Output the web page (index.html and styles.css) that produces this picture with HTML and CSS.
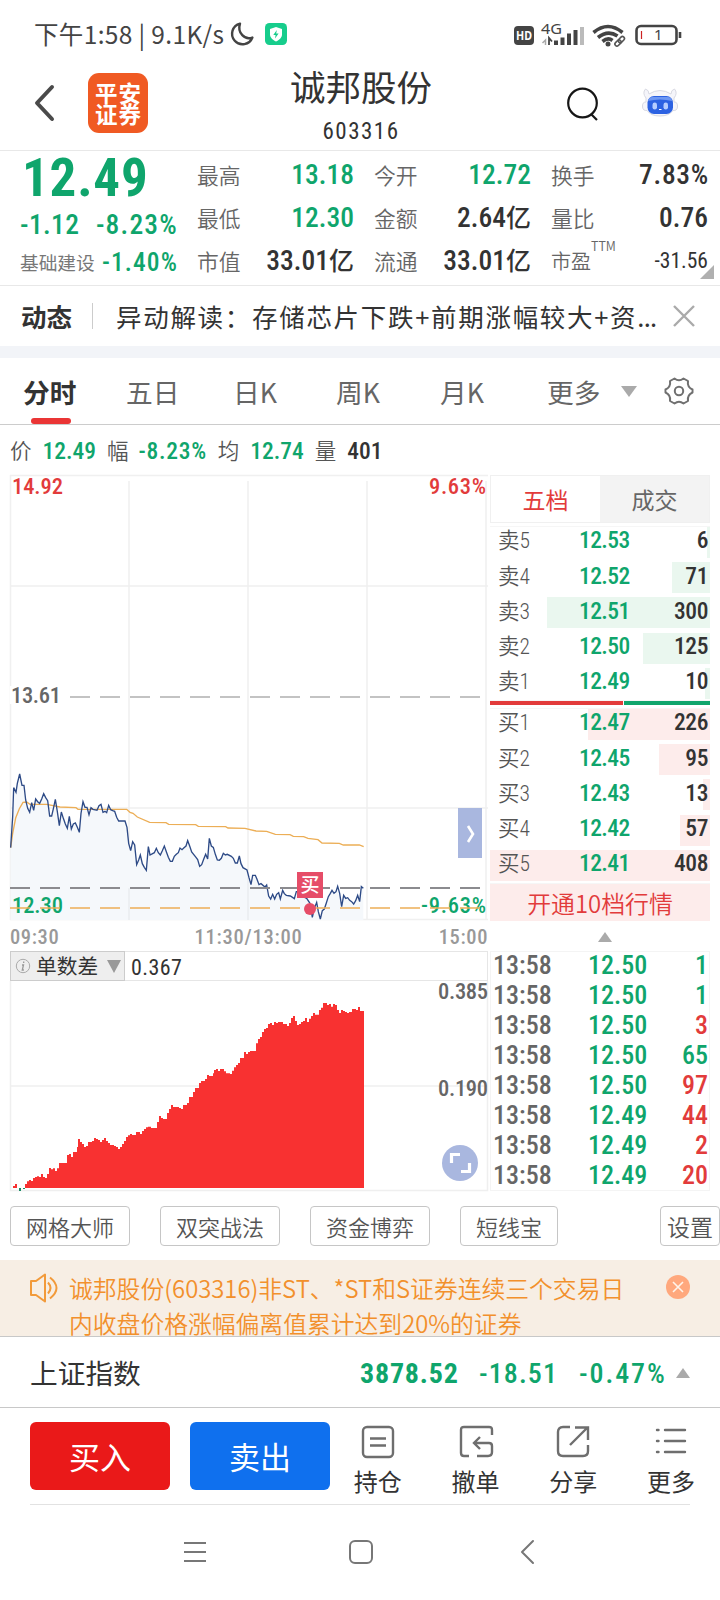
FILE: index.html
```html
<!DOCTYPE html>
<html lang="zh-CN">
<head>
<meta charset="utf-8">
<title>诚邦股份 603316</title>
<link rel="stylesheet" href="styles.css">
</head>
<body>
<div class="phone">
  <div class="status">
    <span class="status-time">下午1:58 | 9.1K/s</span>
    <svg class="status-moon" width="24" height="24" viewBox="0 0 24 24"><path d="M10 1.6A10.5 10.5 0 1 0 22.4 15.5C15 18.5 7 11 10 1.6Z" fill="none" stroke="#444" stroke-width="2.4" stroke-linejoin="round"/></svg>
    <svg class="status-shield" width="22" height="22" viewBox="0 0 22 22"><rect width="22" height="22" rx="4.5" fill="#17cd8c"/><path d="M11 4l6 2v5.500c0 3.500-3 5.500-6 7-3-1.500-6-3.500-6-7V6z" fill="#fff"/><path d="M11.800 7l-3.500 5h2.300l-.6 3.500 3.600-5h-2.400z" fill="#17cd8c"/></svg>
    <svg class="status-right" width="170" height="28" viewBox="512 20 170 28">
      <rect x="514" y="25" width="20" height="19" rx="4" fill="#444"/>
      <text x="516" y="38.500" class="hd" textLength="16" lengthAdjust="spacingAndGlyphs">HD</text>
      <text x="541" y="33" class="g4" textLength="21" lengthAdjust="spacingAndGlyphs">4G</text>
      <path d="M545.500 44v-5l-3 3" stroke="#aaa" stroke-width="1.500" fill="none"/><path d="M549 44v-7l3 3.500" stroke="#444" stroke-width="1.800" fill="none"/>
      <path d="M554 44v-4.500h4V44zM560.500 44v-7.500h4V44zM567 44V32.500h4V44zM573.500 44V29h4V44z" fill="#444"/><path d="M580 44V26h4v18z" fill="#bbb"/>
      <g fill="none" stroke="#444" stroke-width="3.600"><path d="M593.500 31.500Q608 19.500 622.500 31.500"/><path d="M598 36.500Q608 28.500 617.500 35"/><path d="M602.500 40.500Q608 36 612.500 39.500"/></g>
      <circle cx="608" cy="43" r="2.500" fill="#444"/>
      <g fill="none" stroke="#555" stroke-width="1.600"><rect x="614.500" y="40" width="7" height="4" rx="2" transform="rotate(-45 618 42)"/><rect x="618" y="37" width="7" height="4" rx="2" transform="rotate(-45 621 39)"/></g>
      <rect x="636.500" y="25" width="40" height="18" rx="4.500" fill="none" stroke="#444" stroke-width="2.600"/>
      <path d="M641.500 30v8" stroke="#c22" stroke-width="1.200"/><path d="M680 31v6" stroke="#444" stroke-width="2.600"/>
      <text x="654" y="39" class="bat">1</text>
    </svg>
  </div>

  <header class="head">
    <svg class="head-back" width="22" height="38" viewBox="0 0 22 38"><path d="M18 3L3 19l15 16" fill="none" stroke="#4a4a4a" stroke-width="4" stroke-linecap="round" stroke-linejoin="round"/></svg>
    <div class="logo"><span>平安</span><span>证券</span></div>
    <div class="head-title"><h1>诚邦股份</h1><span>603316</span></div>
    <svg class="head-search" width="34" height="36" viewBox="0 0 34 36"><circle cx="16.500" cy="16" r="14.300" fill="none" stroke="#161616" stroke-width="2.200"/><path d="M25.500 27.500l5.500 5.500" stroke="#161616" stroke-width="2.200"/></svg>
    <svg class="head-bot" width="38" height="30" viewBox="0 0 38 30"><path d="M5 10Q1 5 4.500 1q3.500 1 3.500 5Q19-1 30 6q0-4 3.500-5Q37 5 33 10v4q4 0 3.500 5-.5 4-4.500 3.500Q28 28 19 28T6 22.500Q2 23 1.500 19 1 14 5 14z" fill="#f5f5fa" stroke="#d8d9e2" stroke-width="1"/><rect x="6.500" y="8" width="25.500" height="18" rx="6.500" fill="#2c62e2"/><path d="M12 9h14q5 0 5 4-12-3-24 0 1-4 5-4z" fill="#6d97f3"/><rect x="11.500" y="14.500" width="4.500" height="7" rx="2.200" fill="#b5cdff"/><rect x="22.500" y="14.500" width="4.500" height="7" rx="2.200" fill="#b5cdff"/><path d="M18 21.500h2.500" stroke="#fff"/></svg>
  </header>

  <section class="quote">
    <div class="quote-main">
      <div class="price n">12.49</div>
      <div class="change n"><span>-1.12</span><span class="pct">-8.23%</span></div>
      <div class="sector"><span>基础建设</span><b class="n">-1.40%</b></div>
    </div>
    <dl class="quote-grid">
      <div><dt>最高</dt><dd class="n green">13.18</dd></div><div><dt>今开</dt><dd class="n green">12.72</dd></div><div><dt>换手</dt><dd class="n turnover">7.83%</dd></div>
      <div><dt>最低</dt><dd class="n green">12.30</dd></div><div><dt>金额</dt><dd class="n">2.64<i>亿</i></dd></div><div><dt>量比</dt><dd class="n">0.76</dd></div>
      <div><dt>市值</dt><dd class="n">33.01<i>亿</i></dd></div><div><dt>流通</dt><dd class="n">33.01<i>亿</i></dd></div><div class="pe"><dt>市盈<sup>TTM</sup></dt><dd class="n">-31.56</dd></div>
    </dl>
    <svg class="corner" width="14" height="14" viewBox="0 0 14 14"><path d="M14 0v14H0z" fill="#b0b0b0"/></svg>
  </section>

  <section class="news">
    <b>动态</b><span class="news-bar"></span><span class="news-text">异动解读：存储芯片下跌+前期涨幅较大+资<span>...</span></span>
    <svg width="22" height="22" viewBox="0 0 22 22"><path d="M1 1l20 20M21 1L1 21" stroke="#aaa" stroke-width="2.400"/></svg>
  </section>

  <nav class="tabs">
    <span class="tab on">分时</span><span class="tab">五日</span><span class="tab">日K</span><span class="tab">周K</span><span class="tab">月K</span><span class="tab more">更多</span><span class="down"></span>
    <svg width="30" height="30" viewBox="0 0 30 30" fill="none" stroke="#707070" stroke-width="2"><path d="M10.500 2.500Q15 6 19.500 2.500L24 5Q23 11 28.500 13.500v3Q23 19 24 25l-4.500 2.500Q15 24 10.500 27.500L6 25Q7 19 1.500 16.500v-3Q7 11 6 5z" stroke-linejoin="round"/><circle cx="15" cy="15" r="4.200"/></svg>
  </nav>

  <div class="legend n"><i>价</i><span class="green">12.49</span><i>幅</i><span class="green pct">-8.23%</span><i>均</i><span class="green">12.74</span><i>量</i><span>401</span></div>

  <main class="market">
    <div class="charts">
      <svg class="chart" width="480" height="447" viewBox="10 474 480 447">
        <g stroke="#f0f0f0" fill="none" stroke-width="1.500"><path d="M10 475.500H488M10.500 475V920M129 481V920M248 481V920M367 481V920M486 481V920M10 586H488M10 808H488M10 919.500H488"/></g>
        <g transform="translate(0 750) scale(.33333)">
          <path d="M32 293L38 200 41 113 48 127 52 100 59 72 66 106 72 106 77 150 83 175 89 187 95 158 101 181 107 147 119 160 131 131 143 152 149 198 155 198 166 148 178 227 184 186 202 235 208 199 214 237 220 222 226 219 238 247 243 190 249 155 255 172 261 172 267 194 273 173 291 181 303 163 309 187 320 188 326 166 332 179 344 184 356 213 375 213 381 232 386 280 392 302 398 275 404 285 410 344 421 315 427 341 439 361 445 290 450 315 463 308 469 295 481 315 493 288 511 334 517 334 523 319 535 308 540 294 546 299 558 288 563 272 575 306 593 329 599 349 605 344 617 313 623 327 628 265 634 288 640 292 652 330 664 325 670 310 694 319 706 339 712 339 718 318 729 353 741 360 753 404 758 376 766 376 777 404 795 411 800 405 806 438 812 447 818 433 824 447 836 428 841 447 848 421 859 436 883 446 889 425 910 440 930 460 937 502 950 457 961 507 967 482 973 477 985 440 996 421 1002 430 1013 409 1019 430 1025 470 1031 436 1061 462 1073 436 1079 455 1084 410 1090 415V510H32Z" fill="#f5f8fb"/>
          <path d="M387 415V510M744 370V510" stroke="#eaedf0" stroke-width="5"/>
          <path d="M32 293L38 250 47 204 58 176 69 157 80 156 90 163 140 163 180 171 228 173 234 178 380 178 390 187 399 190 412 201 449 217 498 218 506 223 587 224 595 229 677 230 684 234 735 235 768 243 800 244 826 253 870 254 880 259 911 260 924 265 954 269 966 279 1018 280 1030 285 1078 285 1091 290" fill="none" stroke="#ecae56" stroke-width="4"/>
          <path d="M32 293L38 200 41 113 48 127 52 100 59 72 66 106 72 106 77 150 83 175 89 187 95 158 101 181 107 147 113 155 119 160 125 147 131 131 137 143 143 152 149 198 155 198 161 172 166 148 172 185 178 227 184 186 190 205 196 222 202 235 208 199 214 237 220 222 226 219 232 232 238 247 243 190 249 155 255 172 261 172 267 194 273 173 279 178 291 181 297 167 303 163 309 187 315 184 320 188 326 166 332 179 338 182 344 184 350 202 356 213 375 213 381 232 386 280 392 302 398 275 404 285 410 344 416 330 421 315 427 341 433 352 439 361 445 290 450 315 463 308 469 295 475 308 481 315 487 302 493 288 499 305 505 322 511 334 517 334 523 319 529 313 535 308 540 294 546 299 552 293 558 288 563 272 569 288 575 306 588 322 593 329 599 349 605 344 611 328 617 313 623 327 628 265 634 288 640 292 646 313 652 330 658 331 664 325 670 310 676 315 682 313 694 319 700 325 706 339 712 339 718 318 723 341 729 353 741 360 747 383 753 404 758 376 766 376 771 388 777 404 783 401 795 411 800 405 806 438 812 447 818 433 824 447 830 433 836 428 841 447 848 421 853 431 859 436 871 438 883 446 889 425 900 425 910 440 920 445 930 460 937 502 943 475 950 457 955 485 961 507 967 482 973 477 979 459 985 440 991 430 996 421 1002 430 1008 425 1013 409 1019 430 1025 470 1031 436 1037 445 1043 443 1049 451 1055 455 1061 462 1067 452 1073 436 1079 455 1084 410 1090 415" fill="none" stroke="#2d4a86" stroke-width="4"/>
        </g>
        <g stroke-width="1.800" stroke-dasharray="20 10"><path d="M10 697H480" stroke="#c3c3c3"/><path d="M10 888H480" stroke="#8b8b8f"/></g>
        <rect x="10" y="686" width="53" height="18" fill="#fff"/>
        <text x="12" y="494" textLength="51" class="ct red">14.92</text>
        <text x="429" y="494" textLength="57" class="ct red">9.63%</text>
        <text x="11" y="703" textLength="50" class="ct grey">13.61</text>
        <text x="12" y="913" textLength="51" class="ct green">12.30</text>
        <text x="421" y="913" textLength="65" class="ct green">-9.63%</text>
        <path d="M10 908H480" stroke="#ecae56" stroke-opacity=".75" stroke-width="1.800" stroke-dasharray="20 10"/>
        <rect x="297" y="872" width="26" height="26" fill="#e64d68"/><circle cx="310" cy="909" r="6" fill="#e64d68"/>
        <text x="300.500" y="892" class="buytag">买</text>
        <rect x="458" y="808" width="24" height="50" fill="#a9b7df"/><path d="M468 826l5 8-5 8" fill="none" stroke="#fff" stroke-width="2.600"/>
      </svg>
      <div class="axis n"><span>09:30</span><span>11:30/13:00</span><span>15:00</span></div>
      <div class="ind-head n"><div class="ind-pick"><svg width="16" height="16" viewBox="0 0 16 16"><circle cx="8" cy="8" r="6.700" fill="none" stroke="#aaa"/><path d="M8.700 3.500v1.600M7 7h1.500L7.300 12h1.600" fill="none" stroke="#999" stroke-width="1.300"/></svg><span>单数差</span><i></i></div><b>0.367</b></div>
      <svg class="hist" width="480" height="210" viewBox="10 981 480 210">
        <path d="M10.500 981V1190.500H487.500V981M10 1086H487" fill="none" stroke="#efefef" stroke-width="1.500"/>
        <g transform="translate(0 940) scale(.33333)">
          <path d="M75 744V732H81V724H87V720H93V723H99V714H105V711H111V709H117V711H123V702H129V711H135V714H141V702H147V684H153V688H159V685H165V693H171V685H177V669H201V645H207V642H213V651H219V636H231V621H234V597H240V606H246V612H252V621H258V618H264V606H276V603H282V594H288V597H294V600H300V606H306V600H312V594H318V603H324V609H330V615H342V618H348V621H354V627H360V621H366V612H372V603H378V591H384V586H390V582H396V585H408V576H420V582H426V573H432V567H438V562H444V560H453V564H471V546H477V528H483V534H489V537H501V519H507V507H513V495H519V501H537V504H543V507H549V495H561V489H567V471H579V456H585V444H597V429H603V423H615V417H621V405H627V408H639V400H642V390H648V387H654V393H660V387H672V394H678V400H690V402H696V392H702V382H708V375H714V369H720V354H732V336H738V342H744V336H750V333H768V310H774V297H780V291H786V276H792V267H798V264H804V252H810V249H816V255H822V246H828V249H834V246H849V252H861V258H867V249H873V234H879V228H885V243H891V255H897V252H903V246H909V243H915V234H921V246H927V236H933V228H939V219H945V224H957V210H963V203H969V189H981V195H987V192H993V200H999V192H1005V195H1011V210H1017V219H1023V210H1029V213H1035V216H1041V219H1047V216H1056V207H1068V210H1074V201H1080V213H1092V744ZM39 744V738H45V732H51V744Z" fill="#f83131"/>
          <path d="M57 744h6v9h-6zM69 744h6v3h-6z" fill="#188b63"/>
        </g>
        <text x="438" y="999" textLength="50" class="ct grey">0.385</text>
        <text x="438" y="1096" textLength="50" class="ct grey">0.190</text>
        <circle cx="460" cy="1163" r="18" fill="#a9b7df"/><path d="M451.500 1163v-8.500h8.500M469.500 1163v8.500H461" fill="none" stroke="#fff" stroke-width="3.200"/>
      </svg>
    </div>

    <aside class="book">
      <div class="book-tabs"><span class="on">五档</span><span>成交</span></div>
      <div class="rows sell n">
        <div class="row"><em style="width:3px"></em><i>卖5</i><b>12.53</b><u>6</u></div>
        <div class="row"><em style="width:38px"></em><i>卖4</i><b>12.52</b><u>71</u></div>
        <div class="row"><em style="width:163px"></em><i>卖3</i><b>12.51</b><u>300</u></div>
        <div class="row"><em style="width:67px"></em><i>卖2</i><b>12.50</b><u>125</u></div>
        <div class="row"><em style="width:5px"></em><i>卖1</i><b>12.49</b><u>10</u></div>
      </div>
      <div class="ratio"><span></span><span></span></div>
      <div class="rows buy n">
        <div class="row"><em style="width:122px"></em><i>买1</i><b>12.47</b><u>226</u></div>
        <div class="row"><em style="width:51px"></em><i>买2</i><b>12.45</b><u>95</u></div>
        <div class="row"><em style="width:7px"></em><i>买3</i><b>12.43</b><u>13</u></div>
        <div class="row"><em style="width:30px"></em><i>买4</i><b>12.42</b><u>57</u></div>
        <div class="row"><em style="width:220px"></em><i>买5</i><b>12.41</b><u>408</u></div>
      </div>
      <div class="open10">开通10档行情</div>
      <div class="up-wrap"><span class="up"></span></div>
      <div class="ticks n">
        <div><i>13:58</i><b>12.50</b><u class="green">1</u></div>
        <div><i>13:58</i><b>12.50</b><u class="green">1</u></div>
        <div><i>13:58</i><b>12.50</b><u class="red">3</u></div>
        <div><i>13:58</i><b>12.50</b><u class="green">65</u></div>
        <div><i>13:58</i><b>12.50</b><u class="red">97</u></div>
        <div><i>13:58</i><b>12.49</b><u class="red">44</u></div>
        <div><i>13:58</i><b>12.49</b><u class="red">2</u></div>
        <div><i>13:58</i><b>12.49</b><u class="red">20</u></div>
      </div>
    </aside>
  </main>

  <div class="tools"><span>网格大师</span><span>双突战法</span><span>资金博弈</span><span class="short">短线宝</span><span class="set">设置</span></div>

  <div class="notice">
    <svg width="28" height="30" viewBox="0 0 28 30" fill="none" stroke="#f29a3a" stroke-width="2"><path d="M1 8h5l9-6.500v27L6 22H1z" stroke-linejoin="round"/><path d="M18 9.500q5 5.500 0 11M20 4.500q13 10.500 0 21"/></svg>
    <p>诚邦股份(603316)非ST、*ST和S证券连续三个交易日<br>内收盘价格涨幅偏离值累计达到20%的证券</p>
    <svg class="notice-x" width="24" height="24" viewBox="0 0 24 24"><circle cx="12" cy="12" r="12" fill="#ffa87d"/><path d="M7 7l10 10M17 7L7 17" stroke="#fff4ea" stroke-width="1.600"/></svg>
  </div>

  <div class="index"><span class="index-name">上证指数</span><b class="n">3878.52</b><span class="n i2">-18.51</span><span class="n i3">-0.47%</span><span class="up"></span></div>

  <div class="trade">
    <span class="btn buy-btn">买入</span><span class="btn sell-btn">卖出</span>
    <div class="act"><svg width="34" height="34" viewBox="0 0 34 34"><rect x="2" y="2" width="30" height="30" rx="4"/><path d="M9 13.500h16M9 20.500h16"/></svg>持仓</div>
    <div class="act"><svg width="34" height="34" viewBox="0 0 34 34"><path d="M33 10V5q0-3-3-3H5Q2 2 2 5v23q0 3 3 3h5M18 31h11q4 0 4-4v-6q0-3-3-3H15M21 12l-6 6 6 6"/></svg>撤单</div>
    <div class="act"><svg width="34" height="34" viewBox="0 0 34 34"><path d="M14 2H7Q2 2 2 7v19q0 5 5 5h20q5 0 5-5v-6M14 20L31 3M19 2.500h13V15"/></svg>分享</div>
    <div class="act"><svg width="34" height="34" viewBox="0 0 34 34"><path d="M3 5h1.500M11 5h20M3 16h1.500M11 16h20M3 27h1.500M11 27h20" stroke-linecap="round"/></svg>更多</div>
  </div>

  <div class="sysnav">
    <svg width="24" height="24" viewBox="0 0 24 24"><path d="M1 3h22M1 12h22M1 21h22"/></svg>
    <svg class="home" width="26" height="26" viewBox="0 0 26 26"><rect x="2" y="2" width="22" height="22" rx="5"/></svg>
    <svg width="16" height="26" viewBox="0 0 16 26"><path d="M14 2L3 13l11 11" stroke-linecap="round" stroke-linejoin="round"/></svg>
  </div>
</div>
</body>
</html>
```

FILE: styles.css
```css
* { box-sizing: border-box; }
body { margin: 0; background: #fff; font-family: "Noto Sans CJK SC", sans-serif; color: #333; line-height: 1; }
i, em { font-style: normal; }
u { text-decoration: none; }
svg { overflow: visible; flex: none; }
.phone { width: 720px; height: 1600px; overflow: hidden; display: flex; flex-direction: column; white-space: nowrap; }
.n { font-family: Roboto, "Noto Sans CJK SC", sans-serif; font-stretch: 75%; font-weight: 500; }
.green { color: #0fa56c; fill: #0fa56c; }
.red { color: #e23b3b; fill: #e23b3b; }
.grey { fill: #666; }

.status { height: 66px; padding: 0 38px 0 34px; display: flex; align-items: center; flex: none; }
.status-time { font-size: 24.5px; color: #444; width: 196px; padding-top: 3px; letter-spacing: .35px; }
.status-moon { margin-top: 2px; }
.status-shield { margin-left: 11px; margin-top: 2px; }
.status-right { margin-left: auto; margin-top: 3px; }
.hd { font: bold 12px "Noto Sans", sans-serif; fill: #fff; }
.g4 { font: 15px "Noto Sans", sans-serif; fill: #444; }
.bat { font: 15px "Noto Sans", sans-serif; fill: #444; }

.head { height: 84px; display: flex; align-items: flex-start; flex: none; padding-left: 34px; }
.head-back { margin-top: 18px; }
.logo { width: 60px; height: 60px; margin: 7px 0 0 32px; border-radius: 11px; background: #f05a23; color: #fff; font-size: 22.500px; letter-spacing: 1px; font-weight: 700; line-height: 21px; display: flex; flex-direction: column; align-items: center; justify-content: center; padding-left: 1px; }
.head-title { width: 200px; margin-left: 113px; display: flex; flex-direction: column; align-items: center; }
.head-title h1 { margin: 2px 0 0; font-size: 35.5px; line-height: 36px; font-weight: 400; }
.head-title span { font-family: Roboto, sans-serif; font-stretch: 75%; font-size: 23px; line-height: 24px; margin-top: 16px; letter-spacing: 1.5px; }
.head-search { margin: 21px 0 0 105px; }
.head-bot { margin: 22px 0 0 41px; }

.quote { position: relative; height: 136px; flex: none; border-top: 1px solid #e8e8e8; border-bottom: 1px solid #e8e8e8; display: flex; padding-left: 20px; }
.quote-main { width: 177px; color: #0fa56c; }
.price { font-size: 53px; font-weight: 700; line-height: 50px; margin: 2px 0 0 2px; letter-spacing: .8px; }
.change { font-size: 27.500px; letter-spacing: .4px; line-height: 28px; display: flex; justify-content: space-between; width: 158px; margin-top: 8px; }
.change .pct { letter-spacing: 1.200px; }
.sector { display: flex; width: 158px; justify-content: space-between; align-items: center; font-size: 18.700px; color: #777; line-height: 28px; margin-top: 9px; }
.sector b { font-size: 25.500px; color: #0fa56c; letter-spacing: 1.100px; }
.quote-grid { margin: 0; display: grid; grid-template-columns: 157px 157px 157px; column-gap: 20px; grid-auto-rows: 43px; padding-top: 2px; }
.quote-grid div { display: flex; justify-content: space-between; align-items: center; }
.quote-grid dt { font-size: 21.800px; color: #666; font-weight: 350; }
.quote-grid dd { margin: 0; font-size: 27.500px; }
.quote-grid .turnover { letter-spacing: .7px; margin-right: -1px; }
.quote-grid dd i { font-size: 25px; font-weight: 500; }
.quote-grid .pe dt { font-size: 20px; display: flex; align-items: center; }
.pe sup { font-size: 12.500px; line-height: 14px; margin-bottom: 30px; vertical-align: baseline; }
.quote-grid .pe dd { font-size: 21.500px; font-weight: 400; }
.corner { position: absolute; right: 6px; bottom: 6px; }

.news { height: 72px; flex: none; border-bottom: 12px solid #f2f4f8; display: flex; align-items: center; padding-left: 21px; }
.news b { font-size: 25.500px; }
.news-bar { width: 1px; height: 26px; background: #ccc; margin: 0 23px 0 20px; }
.news-text { font-size: 25.500px; letter-spacing: 1.700px; width: 545px; }
.news-text span { letter-spacing: -.7px; }
.news svg { margin-left: 12px; }

.tabs { height: 67px; flex: none; border-bottom: 1px solid #ccc; display: flex; align-items: center; padding-left: 23px; color: #666; font-size: 26.700px; }
.tab { width: 107px; height: 66px; line-height: 67px; position: relative; }
.tab.on { width: 103px; font-weight: 700; color: #333; }
.tab.on::after { content: ""; position: absolute; left: 8px; bottom: 0; width: 40px; height: 6px; border-radius: 3px; background: #ea3535; }
.tab:nth-child(3) { width: 103px; }
.tab:nth-child(4) { width: 104px; }
.tab.more { width: 74px; }
.down { border: 8px solid transparent; border-top: 11px solid #aaa; border-bottom: 0; }
.tabs svg { margin-left: 27px; }

.legend { height: 49px; flex: none; display: flex; align-items: center; padding: 4px 0 0 10px; font-size: 23.500px; }
.legend i { font-weight: 350; font-size: 21.500px; color: #555; margin-right: 11px; }
.legend span { margin-right: 11px; }
.legend .pct { letter-spacing: .7px; margin-left: -1px; }

.market { display: flex; height: 717px; flex: none; padding-left: 10px; }
.charts { width: 480px; }
.charts svg { display: block; }
.ct { font-family: Roboto, sans-serif; font-stretch: 75%; font-weight: 500; font-size: 22.500px; }
.buytag { font: 500 19px "Noto Sans CJK SC", sans-serif; fill: #fff; }
.axis { height: 30px; width: 478px; display: flex; justify-content: space-between; align-items: center; color: #999; font-size: 20.500px; letter-spacing: .6px; padding-top: 3px; }
.axis span:nth-child(2) { margin-left: -1px; letter-spacing: .75px; }
.ind-head { height: 30px; width: 478px; border: 1px solid #e6e6e6; display: flex; align-items: stretch; }
.ind-pick { width: 115px; margin: -1px 0 -1px -1px; background: #eee; border: 1px solid #ccc; display: flex; align-items: center; font-size: 20.700px; padding-left: 4px; }
.ind-pick span { margin: 0 9px 0 5px; font-weight: 400; padding-top: 2px; }
.ind-pick i { border: 7px solid transparent; border-top: 13px solid #999; border-bottom: 0; }
.ind-head b { font-size: 22px; font-weight: 400; line-height: 32px; margin-left: 6px; letter-spacing: .4px; }

.book { width: 220px; }
.book-tabs { height: 48px; margin-top: 1px; display: flex; border: 1px solid #f0f0f0; font-size: 23px; color: #666; }
.book-tabs span { flex: 1; display: flex; align-items: center; justify-content: center; background: #f3f3f3; }
.book-tabs .on { background: #fff; color: #e23b3b; }
.rows { border: solid #f6f6f6; border-width: 1px 0; }
.sell { margin-top: 3px; height: 175px; }
.buy { margin-top: 3px; height: 176px; }
.row { height: 35.200px; display: flex; align-items: center; padding-bottom: 7px; position: relative; font-size: 23.500px; }
.row em { position: absolute; right: 0; top: 0; height: 31px; background: #fdeceb; }
.sell .row em { background: #eaf7ef; }
.row i { width: 89px; padding-left: 8px; font-size: 21.500px; font-weight: 350; color: #555; position: relative; }
.row b { color: #0fa56c; font-weight: 500; position: relative; letter-spacing: -.6px; }
.row u { margin-left: auto; padding-right: 2px; position: relative; letter-spacing: -.4px; }
.ratio { display: flex; gap: 1px; height: 4px; margin-top: 0; }
.ratio span { width: 133px; background: #e23b3b; }
.ratio span + span { flex: 1; background: #0fa56c; }
.open10 { height: 37px; margin-bottom: 1px; background: #fdeceb; color: #e23b3b; font-size: 23.900px; font-weight: 350; display: flex; align-items: center; justify-content: center; }
.up { border: 7.500px solid transparent; border-bottom: 10px solid #aaa; border-top: 0; }
.up-wrap { height: 29px; padding-left: 108px; display: flex; align-items: center; }
.ticks { border: 1px solid #f4f4f4; height: 240px; }
.ticks div { display: flex; height: 30px; align-items: center; font-size: 26px; padding: 0 1px 5px 2px; }
.ticks i { width: 95px; color: #666; }
.ticks b { color: #0fa56c; font-weight: 500; }
.ticks u { margin-left: auto; }

.tools { height: 69px; flex: none; padding: 15px 0 0 10px; display: flex; gap: 30px; }
.tools span { width: 120px; height: 40px; border: 1px solid #c6c6c6; border-radius: 4px; font-size: 22px; font-weight: 350; color: #555; display: flex; align-items: center; justify-content: center; }
.tools .short { width: 98px; }
.tools .set { width: 60px; margin-left: auto; font-size: 23px; }

.notice { height: 77px; flex: none; background: #f7eee4; border-bottom: 1px solid #c8c8c8; display: flex; padding: 13px 0 0 30px; }
.notice p { margin: -3px 0 0 11px; width: 597px; font-size: 23.800px; line-height: 35px; color: #f2902c; font-weight: 350; }
.notice-x { margin-top: 2px; }

.index { height: 71px; flex: none; border-bottom: 1px solid #c8c8c8; display: flex; align-items: center; padding: 2px 0 0 30px; }
.index-name { font-size: 27.700px; width: 330px; }
.index .n { color: #0fa56c; font-size: 28px; padding-top: 2px; }
.index b.n { font-weight: 700; width: 119px; letter-spacing: .8px; }
.index .i2 { width: 100px; letter-spacing: 1.100px; }
.index .i3 { width: 97px; letter-spacing: 1.900px; }

.trade { height: 97px; flex: none; margin: 0 30px; width: 690px; display: flex; padding-top: 14px; background: linear-gradient(#e2e2e2, #e2e2e2) 0 100% / 660px 1px no-repeat; }
.btn { width: 140px; height: 68px; margin-right: 20px; border-radius: 6px; color: #fff; font-size: 31px; display: flex; align-items: center; justify-content: center; padding-bottom: 2px; }
.buy-btn { background: #ea1919; }
.sell-btn { background: #0f70ee; }
.act { width: 97.700px; margin-left: 0; font-size: 24px; display: flex; flex-direction: column; align-items: center; padding-top: 3px; gap: 10px; }
.btn + .act { margin-left: -21px; }
.act svg { fill: none; stroke: #6e6e6e; stroke-width: 2.400; }

.sysnav { flex: none; height: 94px; display: flex; align-items: center; padding-left: 183px; }
.sysnav svg { fill: none; stroke: #777; stroke-width: 2; }
.sysnav .home { margin: 0 145px 0 141px; }
```
